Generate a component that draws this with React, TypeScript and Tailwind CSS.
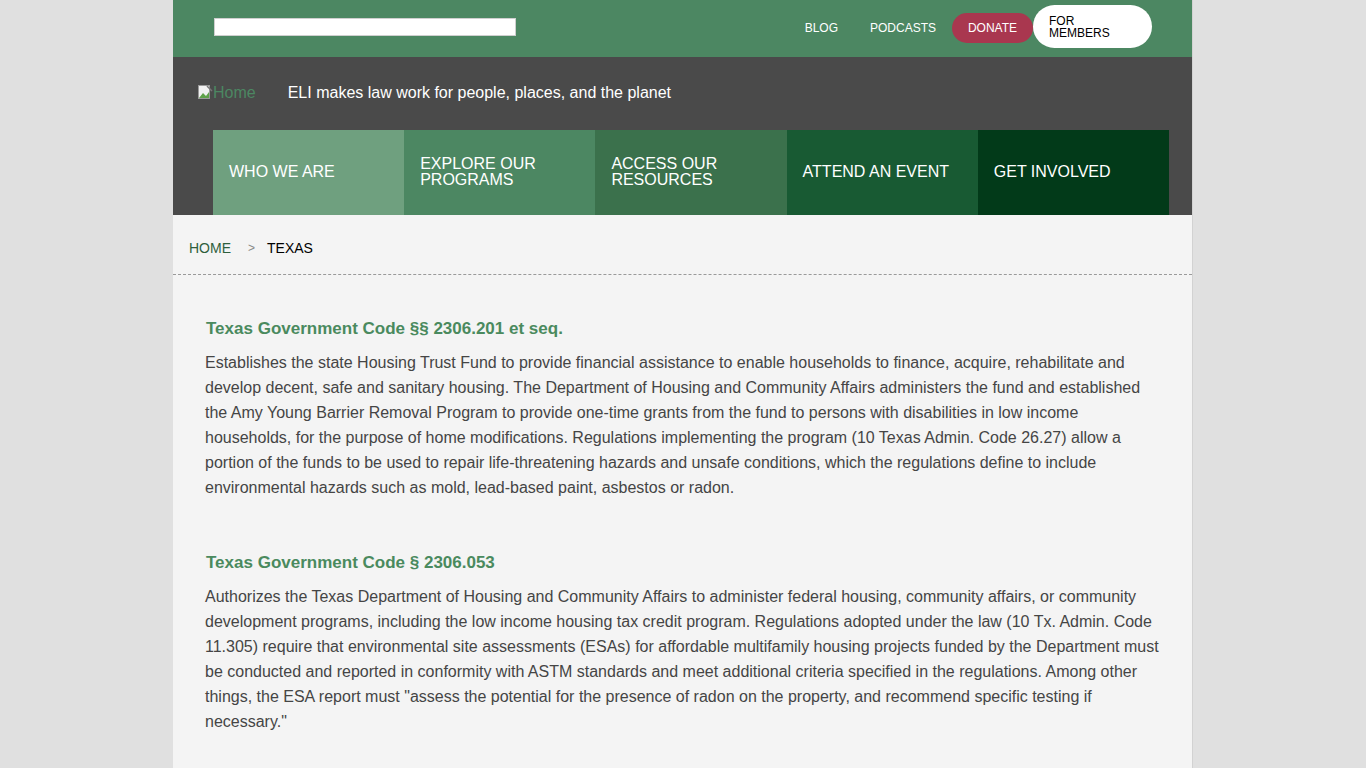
import React from 'react';

const navItems = [
  { label: 'WHO WE ARE', bg: 'bg-[#6fa07f]' },
  { label: 'EXPLORE OUR PROGRAMS', bg: 'bg-[#4c8762]' },
  { label: 'ACCESS OUR RESOURCES', bg: 'bg-[#3b714c]' },
  { label: 'ATTEND AN EVENT', bg: 'bg-[#185a33]' },
  { label: 'GET INVOLVED', bg: 'bg-[#023a19]' },
];

const laws = [
  {
    title: 'Texas Government Code §§ 2306.201 et seq.',
    body: 'Establishes the state Housing Trust Fund to provide financial assistance to enable households to finance, acquire, rehabilitate and develop decent, safe and sanitary housing. The Department of Housing and Community Affairs administers the fund and established the Amy Young Barrier Removal Program to provide one-time grants from the fund to persons with disabilities in low income households, for the purpose of home modifications. Regulations implementing the program (10 Texas Admin. Code 26.27) allow a portion of the funds to be used to repair life-threatening hazards and unsafe conditions, which the regulations define to include environmental hazards such as mold, lead-based paint, asbestos or radon.',
  },
  {
    title: 'Texas Government Code § 2306.053',
    body: 'Authorizes the Texas Department of Housing and Community Affairs to administer federal housing, community affairs, or community development programs, including the low income housing tax credit program. Regulations adopted under the law (10 Tx. Admin. Code 11.305) require that environmental site assessments (ESAs) for affordable multifamily housing projects funded by the Department must be conducted and reported in conformity with ASTM standards and meet additional criteria specified in the regulations. Among other things, the ESA report must "assess the potential for the presence of radon on the property, and recommend specific testing if necessary."',
  },
];

function BrokenImage() {
  return (
    <svg width="16" height="16" viewBox="0 0 16 16" className="inline-block align-[-2px]">
      <rect x="1.5" y="1.5" width="11" height="13" fill="#f2f2f2" stroke="#9a9a9a" />
      <path d="M2 14 L6 9 L9 12 L12 8 L12 14 Z" fill="#5fa24a" />
      <path d="M10 2 L15 7" stroke="#777" strokeWidth="1.5" />
    </svg>
  );
}

export default function App() {
  return (
    <div className="min-h-screen bg-[#e0e0e0] font-['Liberation_Sans',Arial,sans-serif]">
      <div className="mx-auto w-[1020px] border-r border-[#d2d2d2] bg-[#f4f4f4]">
        {/* Top utility bar */}
        <div className="flex h-[57px] items-center bg-[#4c8762] pl-[41px] pr-[40px]">
          <input
            type="text"
            className="mb-[4px] h-[18px] w-[302px] border border-[#cfcfcf] bg-white"
          />
          <div className="ml-auto flex items-center">
            <a className="mb-[1px] mr-[32px] text-[12px] text-white">BLOG</a>
            <a className="mb-[1px] mr-[16px] text-[12px] text-white">PODCASTS</a>
            <a className="mb-[1px] flex h-[30px] w-[81px] items-center justify-center rounded-full bg-[#a9374f] text-[12px] text-white">
              DONATE
            </a>
            <a className="mb-[5px] flex h-[43px] w-[119px] flex-col justify-center rounded-[22px] bg-white pl-[16px] pt-[1px] text-[12px] leading-[12px] text-black">
              <span>FOR</span>
              <span>MEMBERS</span>
            </a>
          </div>
        </div>

        {/* Brand band + main nav */}
        <div className="bg-[#4a4a4a] px-[24px]">
          <div className="flex h-[73px] items-center pb-[2px]">
            <span className="text-[16px] text-[#4c8762]">
              <BrokenImage />Home
            </span>
            <span className="ml-[32px] text-[16px] text-white">
              ELI makes law work for people, places, and the planet
            </span>
          </div>
          <nav className="ml-[16px] grid w-[956px] grid-cols-5">
            {navItems.map((item) => (
              <a
                key={item.label}
                className={`${item.bg} flex h-[85px] items-center pb-[2px] pl-[16px] pr-[24px] text-[16px] leading-[16px] text-white`}
              >
                {item.label}
              </a>
            ))}
          </nav>
        </div>

        {/* Breadcrumb */}
        <div className="flex items-center border-b border-dashed border-[#9a9a9a] pb-[20px] pl-[16px] pt-[27px] text-[14px] leading-[12px]">
          <a className="text-[#2f5f3d]">HOME</a>
          <span className="ml-[17px] mr-[12px] text-[12px] text-[#888]">&gt;</span>
          <span className="text-black">TEXAS</span>
        </div>

        {/* Content */}
        <div className="px-[32px] pb-[40px] pt-[44px]">
          {laws.map((law, i) => (
            <section key={law.title} className={i > 0 ? 'mt-[53px]' : ''}>
              <h2 className="pl-[1px] text-[17px] font-bold leading-[20px] text-[#4a8a5e]">
                {law.title}
              </h2>
              <p className="mt-[11px] text-[16px] leading-[25px] text-[#454545]">{law.body}</p>
            </section>
          ))}
        </div>
      </div>
    </div>
  );
}
